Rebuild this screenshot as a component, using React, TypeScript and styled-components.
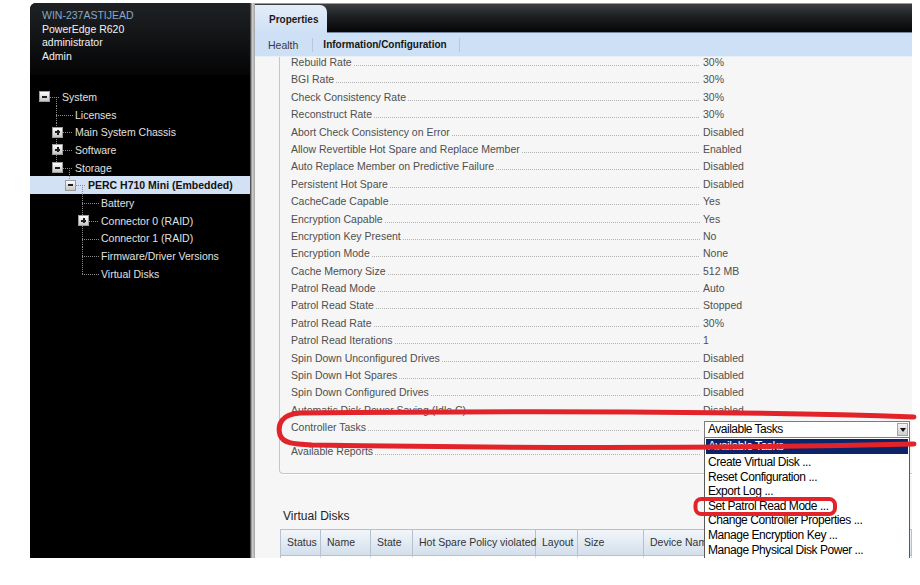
import React from "react";
import styled, { createGlobalStyle } from "styled-components";

type VLine = { x: number; from: "top" | "mid"; to: "mid" | "bottom" };
type TreeNode = {
  label: string;
  level: number;
  exp?: "+" | "-";
  vlines: VLine[];
  selected?: boolean;
};

const full = (x: number): VLine => ({ x, from: "top", to: "bottom" });

const treeNodes: TreeNode[] = [
  { label: "System", level: 0, exp: "-", vlines: [{ x: 26, from: "mid", to: "bottom" }] },
  { label: "Licenses", level: 1, vlines: [full(26)] },
  { label: "Main System Chassis", level: 1, exp: "+", vlines: [full(26)] },
  { label: "Software", level: 1, exp: "+", vlines: [full(26)] },
  {
    label: "Storage",
    level: 1,
    exp: "-",
    vlines: [
      { x: 26, from: "top", to: "mid" },
      { x: 39, from: "mid", to: "bottom" },
    ],
  },
  {
    label: "PERC H710 Mini (Embedded)",
    level: 2,
    exp: "-",
    selected: true,
    vlines: [
      { x: 39, from: "top", to: "mid" },
      { x: 52, from: "mid", to: "bottom" },
    ],
  },
  { label: "Battery", level: 3, vlines: [full(52)] },
  { label: "Connector 0 (RAID)", level: 3, exp: "+", vlines: [full(52)] },
  { label: "Connector 1 (RAID)", level: 3, vlines: [full(52)] },
  { label: "Firmware/Driver Versions", level: 3, vlines: [full(52)] },
  { label: "Virtual Disks", level: 3, vlines: [{ x: 52, from: "top", to: "mid" }] },
];

const properties: [string, string][] = [
  ["Rebuild Rate", "30%"],
  ["BGI Rate", "30%"],
  ["Check Consistency Rate", "30%"],
  ["Reconstruct Rate", "30%"],
  ["Abort Check Consistency on Error", "Disabled"],
  ["Allow Revertible Hot Spare and Replace Member", "Enabled"],
  ["Auto Replace Member on Predictive Failure", "Disabled"],
  ["Persistent Hot Spare", "Disabled"],
  ["CacheCade Capable", "Yes"],
  ["Encryption Capable", "Yes"],
  ["Encryption Key Present", "No"],
  ["Encryption Mode", "None"],
  ["Cache Memory Size", "512 MB"],
  ["Patrol Read Mode", "Auto"],
  ["Patrol Read State", "Stopped"],
  ["Patrol Read Rate", "30%"],
  ["Patrol Read Iterations", "1"],
  ["Spin Down Unconfigured Drives", "Disabled"],
  ["Spin Down Hot Spares", "Disabled"],
  ["Spin Down Configured Drives", "Disabled"],
  ["Automatic Disk Power Saving (Idle C)", "Disabled"],
];

const tasks = [
  "Available Tasks",
  "Create Virtual Disk ...",
  "Reset Configuration ...",
  "Export Log ...",
  "Set Patrol Read Mode ...",
  "Change Controller Properties ...",
  "Manage Encryption Key ...",
  "Manage Physical Disk Power ...",
];

// last column stretches under the task list
const vdColumns: [string, number][] = [
  ["Status", 40],
  ["Name", 50],
  ["State", 42],
  ["Hot Spare Policy violated", 123],
  ["Layout", 42],
  ["Size", 66],
  ["Device Name", 0],
];

const DOT_V = "repeating-linear-gradient(to bottom, #8c8c8c 0 1px, transparent 1px 2px)";
const DOT_H = "repeating-linear-gradient(to right, #8c8c8c 0 1px, transparent 1px 2px)";

// guide lines of the tree, drawn as background layers of each row
const treeBackground = (n: TreeNode) => {
  const layers = n.vlines.map((v) => {
    const top = v.from === "top" ? 0 : 9;
    const bottom = v.to === "bottom" ? 18 : 9;
    return `${DOT_V} ${v.x}px ${top}px / 1px ${bottom - top}px no-repeat`;
  });
  const hx1 = n.exp ? 20 + 13 * n.level : 13 + 13 * n.level;
  const hx2 = 30 + 13 * n.level;
  layers.push(`${DOT_H} ${hx1}px 9px / ${hx2 - hx1}px 1px no-repeat`);
  layers.push(n.selected ? "#d3e1f4" : "transparent");
  return layers.join(", ");
};

const App = () => {
  return (
    <Page>
      <GlobalStyle />
      <Sidebar>
        <SideHeader>
          <HostName>WIN-237ASTIJEAD</HostName>
          <div>PowerEdge R620</div>
          <div>administrator</div>
          <div>Admin</div>
        </SideHeader>
        <Tree>
          {treeNodes.map((n) => (
            <TreeRow
              key={n.label}
              $level={n.level}
              $bg={treeBackground(n)}
              $selected={n.selected}
            >
              {n.exp ? <Expander $open={n.exp === "-"} /> : <LeafGap />}
              <span>{n.label}</span>
            </TreeRow>
          ))}
        </Tree>
      </Sidebar>
      <Divider />
      <Main>
        <TabBar>
          <Tab>Properties</Tab>
        </TabBar>
        <SubTabs>
          <SubTab>Health</SubTab>
          <SubTabSep />
          <SubTab $active>Information/Configuration</SubTab>
          <SubTabSep />
        </SubTabs>
        <Content>
          <GroupBox>
            {properties.map(([label, value]) => (
              <PropRow key={label}>
                <LabelCell>
                  <span>{label}</span>
                  <Leader />
                </LabelCell>
                <ValueCell>{value}</ValueCell>
              </PropRow>
            ))}
            <PropRow $tall>
              <LabelCell>
                <span>Controller Tasks</span>
                <Leader />
              </LabelCell>
              <ValueCell $select>
                <SelectBox>
                  <span>Available Tasks</span>
                  <SelectArrow />
                </SelectBox>
                <ListBox>
                  {tasks.map((t, i) => (
                    <ListItem key={t} $active={i === 0}>
                      {t}
                    </ListItem>
                  ))}
                </ListBox>
              </ValueCell>
            </PropRow>
            <PropRow>
              <LabelCell>
                <span>Available Reports</span>
                <Leader />
              </LabelCell>
              <ValueCell />
            </PropRow>
          </GroupBox>

          <VDHeading>Virtual Disks</VDHeading>
          <VDTable>
            <VDHeader>
              {vdColumns.map(([name, w]) => (
                <VDHeadCell key={name} $w={w}>
                  {name}
                </VDHeadCell>
              ))}
            </VDHeader>
            <VDBodyRow>
              {vdColumns.map(([name, w]) => (
                <VDBodyCell key={name} $w={w} />
              ))}
            </VDBodyRow>
          </VDTable>
        </Content>
      </Main>

      <Annotations width="920" height="585" viewBox="0 0 920 585">
        <path
          d="M 914 417 C 800 413, 600 410, 300 413 C 282 414, 277 424, 280 435 C 283 443, 292 444, 312 445 C 500 448, 700 449, 914 444"
          fill="none"
          stroke="#e2232a"
          strokeWidth="5"
          strokeLinecap="round"
        />
        <rect
          x="695.5"
          y="499"
          width="139.5"
          height="15"
          rx="6"
          fill="none"
          stroke="#e2232a"
          strokeWidth="4"
        />
      </Annotations>
    </Page>
  );
};

export default App;

const GlobalStyle = createGlobalStyle`
  html, body {
    margin: 0;
    padding: 0;
    background: #ffffff;
  }
  body {
    font-family: "Liberation Sans", Arial, sans-serif;
  }
  * {
    box-sizing: border-box;
  }
`;

const Page = styled.div`
  position: relative;
  display: flex;
  height: 558px;
  padding: 3px 0 0 30px;
`;

const Sidebar = styled.div`
  width: 220px;
  display: flex;
  flex-direction: column;
  background: #000;
  border-top-left-radius: 6px;
  overflow: hidden;
`;

const SideHeader = styled.div`
  height: 72px;
  padding: 6px 12px;
  background: linear-gradient(#1f2225, #0c0d0e 70%, #050505);
  color: #f2f2f2;
  font-size: 10.5px;
  line-height: 13.7px;
`;

const HostName = styled.div`
  color: #86a8cb;
`;

const Tree = styled.div`
  padding-top: 13px;
  font-size: 10.5px;
`;

const TreeRow = styled.div<{ $level: number; $bg: string; $selected?: boolean }>`
  height: 17.7px;
  display: flex;
  align-items: center;
  padding-left: ${(p) => 9 + 13 * p.$level}px;
  background: ${(p) => p.$bg};
  color: ${(p) => (p.$selected ? "#111" : "#e0e0e0")};
  font-weight: ${(p) => (p.$selected ? 700 : 400)};
  white-space: nowrap;
`;

const Expander = styled.span<{ $open: boolean }>`
  position: relative;
  flex: none;
  width: 11px;
  height: 11px;
  margin-right: 12px;
  border: 1px solid #9c9c9c;
  background: linear-gradient(#fdfdfd, #c6c6c6);

  &::before {
    content: "";
    position: absolute;
    left: 2px;
    top: 3.5px;
    width: 5px;
    height: 2px;
    background: #1e1e1e;
  }
  &::after {
    content: "";
    display: ${(p) => (p.$open ? "none" : "block")};
    position: absolute;
    left: 3.5px;
    top: 2px;
    width: 2px;
    height: 5px;
    background: #1e1e1e;
  }
`;

const LeafGap = styled.span`
  flex: none;
  width: 23px;
`;

const Divider = styled.div`
  width: 5px;
  background: linear-gradient(to right, #2e2e2e, #cfcfcf 45%, #a4a4a4);
`;

const Main = styled.div`
  width: 657px;
  display: flex;
  flex-direction: column;
  background: #f6f6f6;
`;

const TabBar = styled.div`
  height: 30px;
  display: flex;
  align-items: flex-end;
  background: linear-gradient(#3a3e42 0%, #1d1f21 45%, #050505 100%);
  border-top: 1px solid #9a9a9a;
  border-bottom: 1px solid #7487a0;
`;

const Tab = styled.div`
  width: 72px;
  height: 28px;
  margin-bottom: -1px;
  padding-left: 14px;
  display: flex;
  align-items: center;
  background: linear-gradient(#e4edf8, #cfe0f5);
  border-top-right-radius: 7px;
  color: #1a1a1a;
  font-size: 10px;
  font-weight: 700;
`;

const SubTabs = styled.div`
  height: 24px;
  display: flex;
  align-items: center;
  background: #cde0f6;
  border-bottom: 1px solid #e9eff6;
`;

const SubTab = styled.div<{ $active?: boolean }>`
  padding: ${(p) => (p.$active ? "0 12px 0 10px" : "0 14px 0 13px")};
  font-size: ${(p) => (p.$active ? "10px" : "10.5px")};
  font-weight: ${(p) => (p.$active ? 700 : 400)};
  color: ${(p) => (p.$active ? "#151515" : "#3a3a3a")};
`;

const SubTabSep = styled.span`
  width: 1px;
  height: 14px;
  background: #b7c9df;
`;

const Content = styled.div`
  position: relative;
  flex: 1;
  overflow: hidden;
`;

const GroupBox = styled.div`
  margin: -3.2px 0 0 24px;
  padding: 0 0 13px 11px;
  border-left: 1px solid #c6c6c6;
  border-bottom: 1px solid #c6c6c6;
  border-bottom-left-radius: 4px;
  box-shadow: 0 1px 0 #ffffff;
`;

const PropRow = styled.div<{ $tall?: boolean }>`
  display: flex;
  align-items: flex-start;
  height: ${(p) => (p.$tall ? "24px" : "17.4px")};
  font-size: 10.5px;
  line-height: 11px;
  color: #4f4f4f;
`;

const LabelCell = styled.div`
  flex: none;
  width: 412px;
  height: 17.4px;
  display: flex;
  align-items: center;
  white-space: nowrap;
`;

const Leader = styled.span`
  flex: 1;
  height: 1px;
  margin: 6px 3px 0 2px;
  background: repeating-linear-gradient(to right, #b3b3b3 0 1px, transparent 1px 2px);
`;

const ValueCell = styled.div<{ $select?: boolean }>`
  position: relative;
  flex: 1;
  height: 17.4px;
  display: flex;
  flex-direction: column;
  justify-content: ${(p) => (p.$select ? "flex-start" : "center")};
  padding-top: ${(p) => (p.$select ? "2px" : "0")};
  white-space: nowrap;
`;

const SelectBox = styled.div`
  margin-left: 1px;
  width: 206px;
  height: 17px;
  flex: none;
  display: flex;
  align-items: center;
  padding: 0 1px 0 3px;
  background: #fff;
  border: 1px solid #7c7c7c;
  color: #000;
  font-size: 12px;
  letter-spacing: -0.5px;
  line-height: 15px;
`;

const SelectArrow = styled.span`
  position: relative;
  margin-left: auto;
  width: 11px;
  height: 13px;
  border: 1px solid #a3a3a3;
  background: linear-gradient(#f4f4f4, #cdcdcd);

  &::after {
    content: "";
    position: absolute;
    left: 2px;
    top: 4px;
    border-left: 3px solid transparent;
    border-right: 3px solid transparent;
    border-top: 4px solid #111;
  }
`;

const ListBox = styled.div`
  position: absolute;
  top: 19px;
  left: 1px;
  z-index: 2;
  width: 206px;
  padding: 1px 1px 1px 1px;
  background: #fff;
  border: 1px solid #5a5a5a;
  border-top: none;
`;

const ListItem = styled.div<{ $active?: boolean }>`
  height: 14.6px;
  line-height: 14.6px;
  padding-left: 2px;
  margin-bottom: ${(p) => (p.$active ? "1.5px" : "0")};
  font-size: 12px;
  letter-spacing: -0.45px;
  color: ${(p) => (p.$active ? "#fff" : "#000")};
  background: ${(p) => (p.$active ? "#0b2468" : "transparent")};
`;

const VDHeading = styled.div`
  margin: 35px 0 6px 28px;
  font-size: 12px;
  line-height: 14px;
  color: #222;
`;

const VDTable = styled.div`
  margin-left: 25px;
  border-left: 1px solid #b6c2d0;
`;

const VDHeader = styled.div`
  display: flex;
  height: 27px;
  background: linear-gradient(#f2f6fa, #d3dfeb);
  border-top: 1px solid #b4c1d0;
  border-bottom: 1px solid #b4c1d0;
`;

const VDHeadCell = styled.div<{ $w: number }>`
  flex: ${(p) => (p.$w ? "none" : "1")};
  width: ${(p) => (p.$w ? `${p.$w}px` : "auto")};
  display: flex;
  align-items: center;
  padding: 0 0 2px 6px;
  border-right: 1px solid #b5c1cf;
  font-size: 10.5px;
  color: #333;
  white-space: nowrap;
`;

const VDBodyRow = styled.div`
  display: flex;
  height: 20px;
  background: #fff;
`;

const VDBodyCell = styled.div<{ $w: number }>`
  flex: ${(p) => (p.$w ? "none" : "1")};
  width: ${(p) => (p.$w ? `${p.$w}px` : "auto")};
  border-right: 1px solid #d4d9e0;
`;

const Annotations = styled.svg`
  position: absolute;
  top: 0;
  left: 0;
  z-index: 5;
  pointer-events: none;
`;
